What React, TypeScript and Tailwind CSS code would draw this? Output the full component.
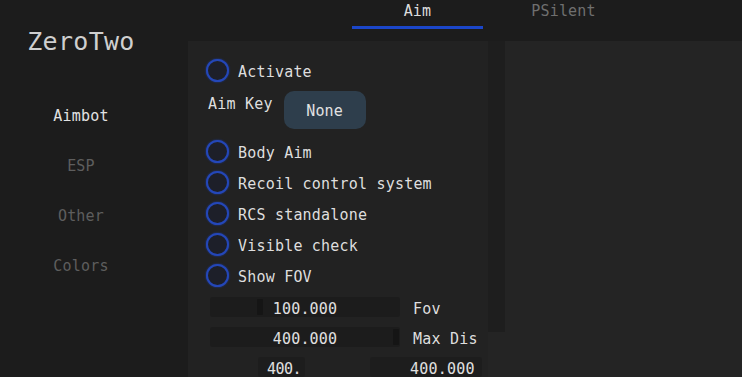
import { useState } from "react";

type SliderProps = {
  value: string;
  label?: string;
  grab: number;
};

function Check({ label }: { label: string }) {
  const [on, setOn] = useState(false);
  return (
    <div
      className="flex items-center h-[23px] cursor-pointer"
      onClick={() => setOn(!on)}
    >
      <div
        className={
          "w-[23px] h-[23px] rounded-full border-2 border-[#2447b8] shadow-[0_0_2px_#1f3fa8] " +
          (on ? "bg-[#2447b8]" : "bg-[#1d1f29]")
        }
      />
      <span className="ml-[9px] translate-y-[1px] text-[#dedede]">{label}</span>
    </div>
  );
}

function Slider({ value, label, grab }: SliderProps) {
  return (
    <div className="flex items-center h-[20px] ml-[4px]">
      <div className="relative w-[190px] h-[20px] bg-[#1c1c1c] rounded-[3px] flex items-center justify-center">
        <div
          className="absolute top-[2px] w-[6px] h-[16px] bg-[#151515] rounded-[1px]"
          style={{ left: grab }}
        />
        <span className="relative translate-y-[2px] text-[#e0e0e0]">{value}</span>
      </div>
      {label && (
        <span className="ml-[13px] translate-y-[2px] text-[#dedede]">{label}</span>
      )}
    </div>
  );
}

export default function App() {
  const checks = [
    "Body Aim",
    "Recoil control system",
    "RCS standalone",
    "Visible check",
    "Show FOV",
  ];
  const menu = ["Aimbot", "ESP", "Other", "Colors"];

  return (
    <div className="w-[742px] h-[377px] bg-[#1c1c1c] flex overflow-hidden font-['DejaVu_Sans_Mono',monospace] text-[15px] leading-[20px] tracking-[0.2px]">
      <div className="w-[188px] shrink-0">
        <div className="w-[162px] flex flex-col items-center">
          <div className="mt-[27px] h-[30px] leading-[30px] text-[25px] tracking-[0.3px] text-[#cfcfcf]">
            ZeroTwo
          </div>
          <div className="mt-[49px] flex flex-col items-center gap-[30px]">
            {menu.map((m, i) => (
              <div
                key={m}
                className={
                  "h-[20px] " + (i === 0 ? "text-[#e2e2e2]" : "text-[#5e5e5e]")
                }
              >
                {m}
              </div>
            ))}
          </div>
        </div>
      </div>

      <div className="flex-1 flex flex-col">
        <div className="h-[42px] flex pl-[164px]">
          <div className="w-[131px] flex flex-col items-center">
            <div className="h-[20px] mt-[1px] text-[#dcdcdc]">Aim</div>
            <div className="mt-[5px] w-full h-[3px] bg-[#1b46c9]" />
          </div>
          <div className="w-[131px] ml-[15px] flex flex-col items-center">
            <div className="h-[20px] mt-[1px] text-[#6f6f6f]">PSilent</div>
          </div>
        </div>

        <div className="flex flex-1">
          <div className="w-[300px] bg-[#222222] pl-[18px] pt-[18px] flex flex-col overflow-hidden">
            <Check label="Activate" />
            <div className="mt-[9px] h-[38px] flex items-start">
              <span className="ml-[2px] mt-[3px] text-[#dedede]">Aim Key</span>
              <button className="ml-[11px] w-[82px] h-[38px] rounded-[10px] bg-[#2e3e4c] text-[#e2e2e2] text-[15px] pt-[2px]">
                None
              </button>
            </div>
            <div className="mt-[11px] flex flex-col gap-[8px]">
              {checks.map((c) => (
                <Check key={c} label={c} />
              ))}
            </div>
            <div className="mt-[10px] flex flex-col gap-[10px]">
              <Slider value="100.000" label="Fov" grab={47} />
              <Slider value="400.000" label="Max Dis" grab={183} />
              <div className="flex h-[20px]">
                <div className="ml-[52px] w-[47px] h-[20px] bg-[#1d1d1d] rounded-[3px] flex items-center">
                  <span className="ml-[9px] translate-y-[2px] tracking-[-0.5px] text-[#e0e0e0]">400.</span>
                </div>
                <div className="ml-[65px] w-[112px] h-[20px] bg-[#1d1d1d] rounded-[3px] flex items-center">
                  <span className="ml-[40px] translate-y-[2px] text-[#e0e0e0]">400.000</span>
                </div>
              </div>
            </div>
          </div>
          <div className="w-[17px] flex flex-col">
            <div className="h-[291px] bg-[#1e1e1e]" />
            <div className="flex-1 bg-[#242424]" />
          </div>
          <div className="flex-1 bg-[#242424]" />
        </div>
      </div>
    </div>
  );
}
